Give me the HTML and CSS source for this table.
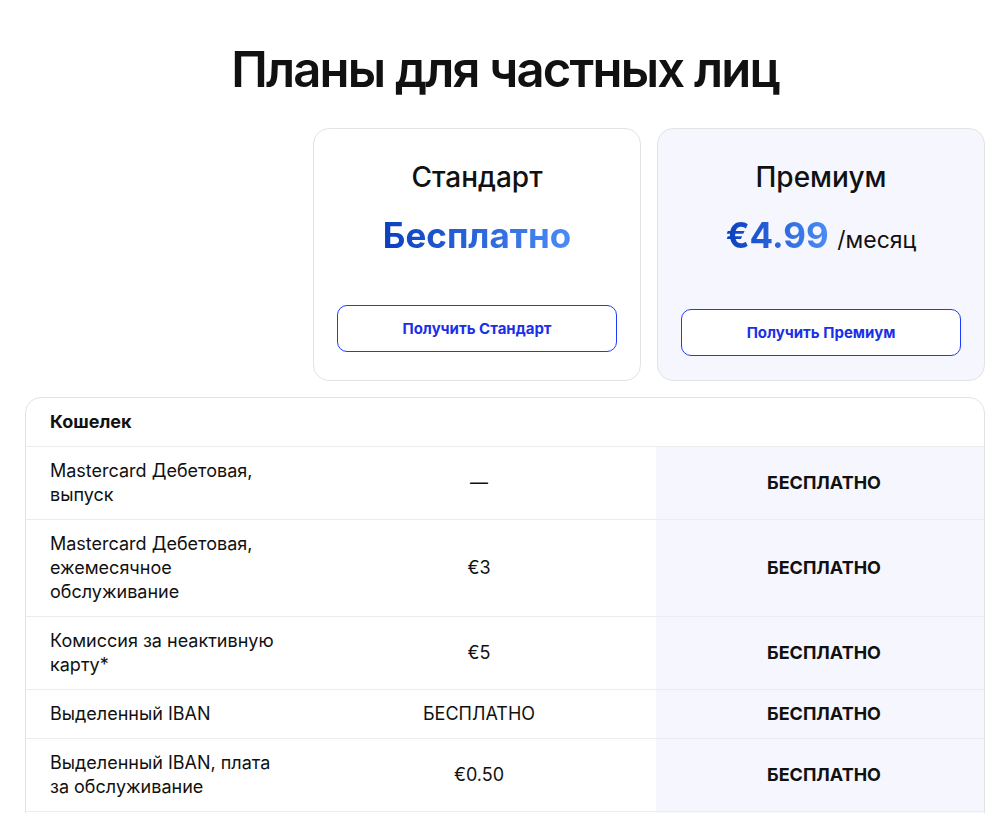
FILE: index.html
```html
<!DOCTYPE html>
<html>
    <head>
        <meta charset="utf-8">
        <title>Планы</title>
        <link rel="stylesheet" href="styles.css">
    </head>
    <body>
        <div id="page">
            <h1 id="title">Планы для частных лиц</h1>

            <div id="plans">
                <div class="spacer"></div>
                <div class="plan">
                    <h2 class="plan-name">Стандарт</h2>
                    <p class="plan-price"><span class="price-value">Бесплатно</span></p>
                    <button class="plan-btn">Получить Стандарт</button>
                </div>
                <div class="plan premium">
                    <h2 class="plan-name">Премиум</h2>
                    <p class="plan-price"><span class="price-value">€4.99</span> <span class="price-period">/месяц</span></p>
                    <button class="plan-btn">Получить Премиум</button>
                </div>
            </div>

            <div id="compare">
                <div class="row head">
                    <div class="cell label">Кошелек</div>
                </div>
                <div class="row">
                    <div class="cell label">Mastercard Дебетовая,<br>выпуск</div>
                    <div class="cell std">—</div>
                    <div class="cell prem">БЕСПЛАТНО</div>
                </div>
                <div class="row">
                    <div class="cell label">Mastercard Дебетовая,<br>ежемесячное<br>обслуживание</div>
                    <div class="cell std">€3</div>
                    <div class="cell prem">БЕСПЛАТНО</div>
                </div>
                <div class="row">
                    <div class="cell label">Комиссия за неактивную<br>карту*</div>
                    <div class="cell std">€5</div>
                    <div class="cell prem">БЕСПЛАТНО</div>
                </div>
                <div class="row">
                    <div class="cell label">Выделенный IBAN</div>
                    <div class="cell std">БЕСПЛАТНО</div>
                    <div class="cell prem">БЕСПЛАТНО</div>
                </div>
                <div class="row">
                    <div class="cell label">Выделенный IBAN, плата<br>за обслуживание</div>
                    <div class="cell std">€0.50</div>
                    <div class="cell prem">БЕСПЛАТНО</div>
                </div>
                <div class="row">
                    <div class="cell label"></div>
                    <div class="cell std"></div>
                    <div class="cell prem"></div>
                </div>
            </div>
        </div>
    </body>
</html>
```

FILE: styles.css
```css
body {
    margin: 0px;
    background-color: #fff;
    color: #111;
    font-family: Inter, "Noto Sans", sans-serif;
}
#page {
    width: 960px;
    margin-left: 25px;
}
#title {
    margin: 0px;
    padding: 40px 0px 28px;
    font-size: 49px;
    font-weight: 600;
    line-height: 60px;
    letter-spacing: -1.8px;
    text-align: center;
}
#plans {
    display: grid;
    grid-template-columns: 272px 1fr 1fr;
    column-gap: 16px;
    align-items: stretch;
}
.plan {
    border: 1px solid #e3e3e6;
    border-radius: 16px;
    padding: 28px 23px 24px;
    display: flex;
    flex-direction: column;
    align-items: center;
}
.premium {
    background-color: #f6f7fe;
}
.plan-name {
    margin: 0px;
    font-size: 28px;
    font-weight: 500;
    line-height: 40px;
}
.plan-price {
    margin: 12px 0px 0px;
    line-height: 52px;
}
.price-value {
    font-size: 35px;
    font-weight: 700;
    background: linear-gradient(90deg, #0b3fbf, #4b8cf6);
    -webkit-background-clip: text;
    background-clip: text;
    color: transparent;
}
.price-period {
    margin-left: 4px;
    font-size: 23px;
    color: #111;
}
.plan-btn {
    margin-top: 37px;
    width: 100%;
    height: 47px;
    border: 1px solid #1c3bff;
    border-radius: 10px;
    background-color: #fff;
    color: #1a30e8;
    font-family: Inter, "Noto Sans", sans-serif;
    font-size: 15px;
    font-weight: 700;
}
.premium .plan-btn {
    margin-top: 41px;
}
#compare {
    margin-top: 16px;
    border: 1px solid #e3e3e6;
    border-radius: 16px;
    overflow: hidden;
}
.row {
    display: grid;
    grid-template-columns: 276px 354px 1fr;
    border-top: 1px solid #ececef;
    font-size: 18px;
    line-height: 24px;
    min-height: 48px;
}
.row.head {
    border-top: none;
    font-weight: 700;
}
.cell {
    padding: 12px 24px;
    display: flex;
    align-items: center;
}
.std {
    justify-content: center;
}
.prem {
    padding-left: 32px;
    justify-content: center;
    font-weight: 700;
    background-color: #f6f7fe;
}
```
